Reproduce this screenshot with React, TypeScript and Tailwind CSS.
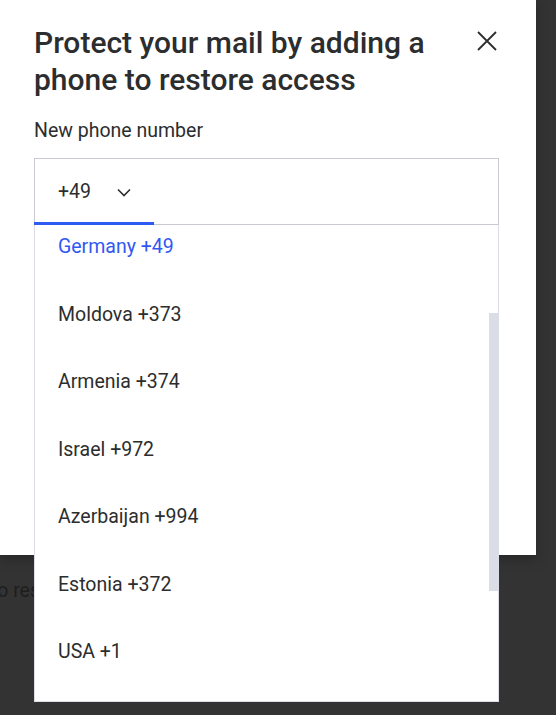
import React from 'react';

const countries = [
  { name: 'Germany', code: '+49', active: true },
  { name: 'Moldova', code: '+373' },
  { name: 'Armenia', code: '+374' },
  { name: 'Israel', code: '+972' },
  { name: 'Azerbaijan', code: '+994' },
  { name: 'Estonia', code: '+372' },
  { name: 'USA', code: '+1' },
];

const App: React.FC = () => {
  return (
    <div
      className="relative w-[556px] h-[715px] overflow-hidden bg-[#333333]"
      style={{ fontFamily: 'Roboto, "Liberation Sans", sans-serif' }}
    >
      {/* page behind the overlay */}
      <div className="absolute left-[-9px] top-[576px] text-[19.5px] text-[#1e1e1e] whitespace-nowrap">
        to restore access
      </div>

      {/* modal */}
      <div className="relative w-[536px] h-[555px] bg-white px-[34px] pt-[24px] shadow-[0_4px_12px_rgba(0,0,0,0.25)]">
        <div className="flex items-start justify-between">
          <h1 className="w-[400px] text-[30px] leading-[37px] font-medium text-[#2c2d2e]">
            Protect your mail by adding a phone to restore access
          </h1>
          <button className="mt-[6px] mr-[4px] w-[22px] h-[22px] flex items-center justify-center text-[#2c2d2e]">
            <svg width="20" height="20" viewBox="0 0 20 20" fill="none" stroke="currentColor" strokeWidth="1.8">
              <path d="M1 1l18 18M19 1L1 19" />
            </svg>
          </button>
        </div>

        <div className="mt-[21px] text-[19.5px] leading-[24px] text-[#2c2d2e]">New phone number</div>

        <div className="relative mt-[15px] h-[67px] w-[465px] border border-[#c9cbd3] flex items-center pl-[23px]">
          <span className="text-[19.5px] text-[#2c2d2e]">+49</span>
          <svg className="ml-[26px] mt-[2px]" width="14" height="9" viewBox="0 0 14 9" fill="none" stroke="#2c2d2e" strokeWidth="1.6">
            <path d="M1 1.5l6 6 6-6" />
          </svg>
          <div className="absolute left-[-1px] bottom-[-1px] w-[120px] h-[3px] bg-[#2f5af4]" />
        </div>
      </div>

      {/* dropdown */}
      <div className="absolute left-[34px] top-[225px] w-[465px] h-[477px] bg-white border border-t-0 border-[#dcdde6] overflow-hidden">
        <div className="-mt-[12px]">
          {countries.map((c) => (
            <div
              key={c.name}
              className={`h-[67.5px] flex items-center pl-[23px] text-[19.5px] ${c.active ? 'text-[#3158f2]' : 'text-[#2c2d2e]'}`}
            >
              {c.name} {c.code}
            </div>
          ))}
        </div>
        <div className="absolute right-0 top-[88px] w-[9px] h-[278px] bg-[#dadde6]" />
      </div>
    </div>
  );
};

export default App;
